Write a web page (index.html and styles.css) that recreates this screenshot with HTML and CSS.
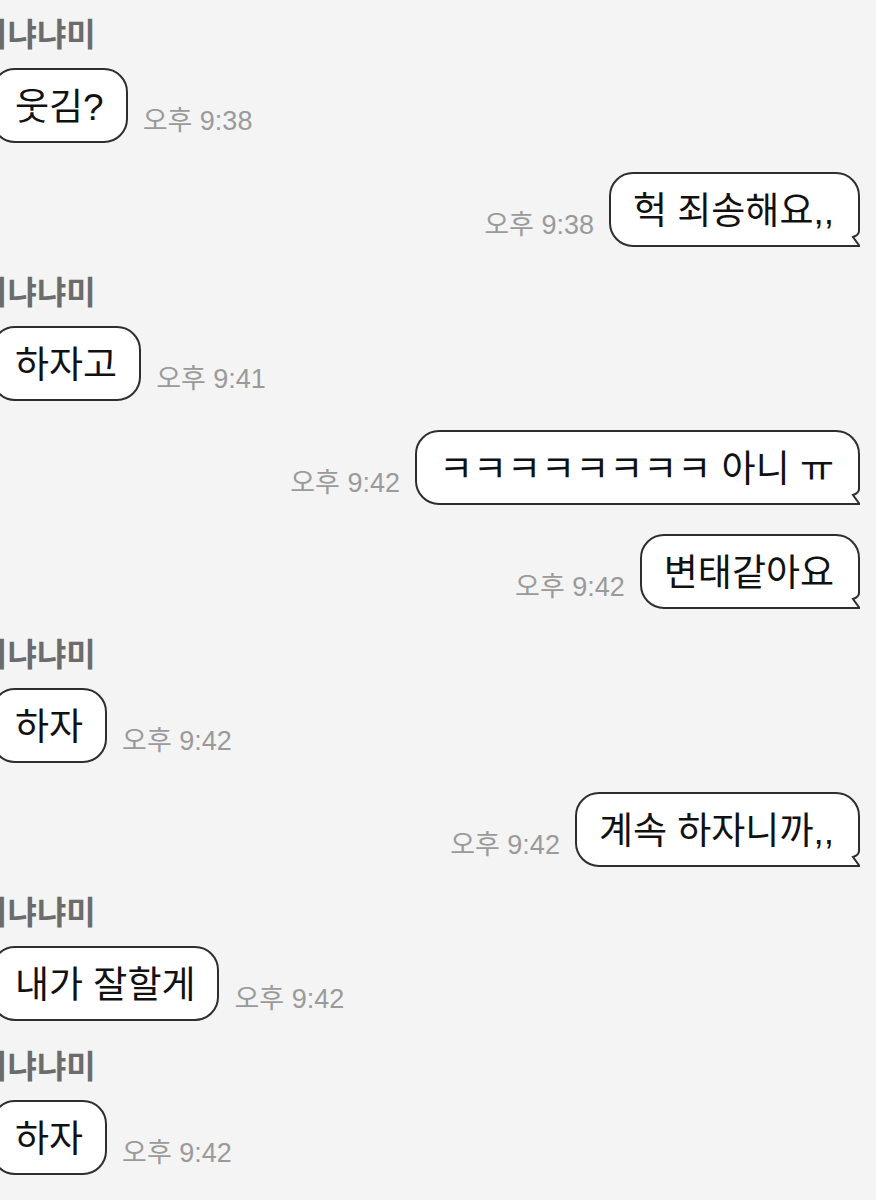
FILE: index.html
```html
<!DOCTYPE html>
<html lang="ko">
<head>
<meta charset="utf-8">
<title>채팅</title>
<link rel="stylesheet" href="styles.css">
</head>
<body>
<div class="chat">
  <div class="name">미냐냐미</div>
  <div class="msg them">
    <div class="bubble">웃김?</div>
    <span class="time">오후 9:38</span>
  </div>
  <div class="msg me">
    <span class="time">오후 9:38</span>
    <div class="bubble">헉 죄송해요,,<svg class="tail" width="12" height="18" viewBox="0 0 12 18"><path class="tail-bg" d="M12,2 L11,2 C11,5.5 8,7 5,8 L11.5,17 L12,17 Z"/><path class="tail-line" d="M11,2 C11,5.5 8,7 5,8 L11.5,17 L0,17"/></svg></div>
  </div>

  <div class="name">미냐냐미</div>
  <div class="msg them">
    <div class="bubble">하자고</div>
    <span class="time">오후 9:41</span>
  </div>
  <div class="msg me">
    <span class="time">오후 9:42</span>
    <div class="bubble">ㅋㅋㅋㅋㅋㅋㅋㅋ 아니 ㅠ<svg class="tail" width="12" height="18" viewBox="0 0 12 18"><path class="tail-bg" d="M12,2 L11,2 C11,5.5 8,7 5,8 L11.5,17 L12,17 Z"/><path class="tail-line" d="M11,2 C11,5.5 8,7 5,8 L11.5,17 L0,17"/></svg></div>
  </div>
  <div class="msg me">
    <span class="time">오후 9:42</span>
    <div class="bubble">변태같아요<svg class="tail" width="12" height="18" viewBox="0 0 12 18"><path class="tail-bg" d="M12,2 L11,2 C11,5.5 8,7 5,8 L11.5,17 L12,17 Z"/><path class="tail-line" d="M11,2 C11,5.5 8,7 5,8 L11.5,17 L0,17"/></svg></div>
  </div>

  <div class="name">미냐냐미</div>
  <div class="msg them">
    <div class="bubble">하자</div>
    <span class="time">오후 9:42</span>
  </div>
  <div class="msg me">
    <span class="time">오후 9:42</span>
    <div class="bubble">계속 하자니까,,<svg class="tail" width="12" height="18" viewBox="0 0 12 18"><path class="tail-bg" d="M12,2 L11,2 C11,5.5 8,7 5,8 L11.5,17 L12,17 Z"/><path class="tail-line" d="M11,2 C11,5.5 8,7 5,8 L11.5,17 L0,17"/></svg></div>
  </div>

  <div class="name">미냐냐미</div>
  <div class="msg them">
    <div class="bubble">내가 잘할게</div>
    <span class="time">오후 9:42</span>
  </div>

  <div class="name">미냐냐미</div>
  <div class="msg them">
    <div class="bubble">하자</div>
    <span class="time">오후 9:42</span>
  </div>
</div>
</body>
</html>
```

FILE: styles.css
```css
html, body {
  margin: 0;
  padding: 0;
  background: #f4f4f4;
}

body {
  font-family: "Noto Sans CJK KR", "Noto Sans", sans-serif;
  color: #111;
  overflow: hidden;
}

.chat {
  display: flex;
  flex-direction: column;
  padding-top: 15px;
  height: 1200px;
  box-sizing: border-box;
}

.name {
  font-size: 32px;
  font-weight: 700;
  line-height: 34px;
  color: #6c6c6c;
  margin: 26px 0 19px -22px;
  white-space: nowrap;
}

.name:first-child {
  margin-top: 0;
}

.msg {
  display: flex;
  align-items: flex-end;
  gap: 15px;
}

.msg + .msg {
  margin-top: 29px;
}

.msg.them {
  justify-content: flex-start;
  margin-left: -9px;
}

.msg.me {
  justify-content: flex-end;
  padding-right: 16px;
}

.bubble {
  position: relative;
  flex: none;
  background: #fff;
  border: 2px solid #2e2e2e;
  border-radius: 24px;
  padding: 2px 24px 0 22px;
  height: 69px;
  font-family: "Liberation Sans", "Noto Sans CJK KR", sans-serif;
  font-size: 37px;
  line-height: 71px;
  white-space: nowrap;
}

.msg.them .bubble {
  padding-right: 22px;
}

.msg.me .bubble {
  border-bottom-right-radius: 0;
}

.time {
  flex: none;
  font-family: "Liberation Sans", "Noto Sans CJK KR", sans-serif;
  font-size: 27px;
  line-height: 27px;
  color: #9a9a9a;
  margin-bottom: 8px;
  white-space: nowrap;
}

.tail {
  position: absolute;
  right: -2px;
  bottom: -2px;
  display: block;
}

.tail-bg {
  fill: #f4f4f4;
}

.tail-line {
  fill: none;
  stroke: #2e2e2e;
  stroke-width: 2;
  stroke-linejoin: miter;
}
```
